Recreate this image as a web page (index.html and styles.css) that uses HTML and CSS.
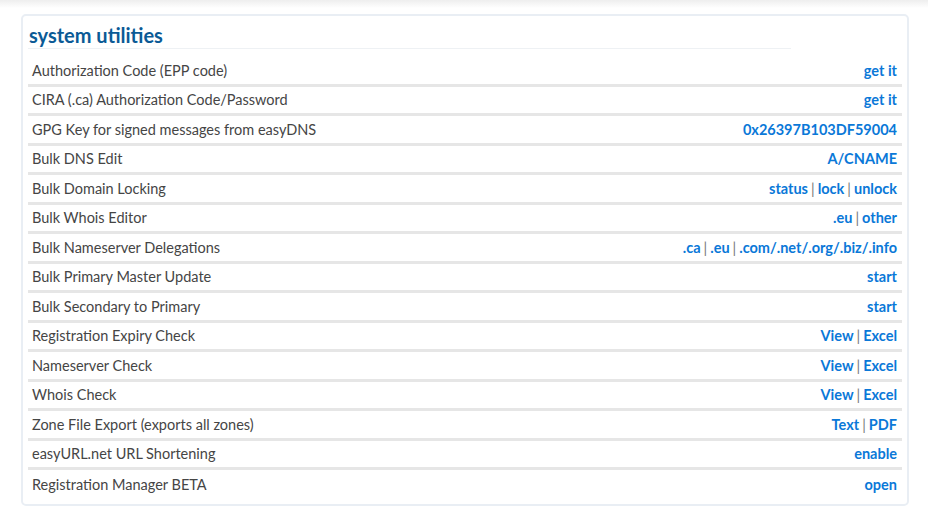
FILE: index.html
```html
<!DOCTYPE html>
<html>
<head>
<meta charset="utf-8">
<link rel="stylesheet" href="styles.css">
</head>
<body>
<div class="topshade"></div>
<div class="card">
  <h2 class="title">system utilities</h2>
  <div class="list">
    <div class="row"><span class="label">Authorization Code (EPP code)</span><span class="links"><a href="#">get it</a></span></div>
    <div class="row"><span class="label">CIRA (.ca) Authorization Code/Password</span><span class="links"><a href="#">get it</a></span></div>
    <div class="row"><span class="label">GPG Key for signed messages from easyDNS</span><span class="links"><a href="#">0x26397B103DF59004</a></span></div>
    <div class="row"><span class="label">Bulk DNS Edit</span><span class="links"><a href="#">A/CNAME</a></span></div>
    <div class="row"><span class="label">Bulk Domain Locking</span><span class="links"><a href="#">status</a><span class="sep">|</span><a href="#">lock</a><span class="sep">|</span><a href="#">unlock</a></span></div>
    <div class="row"><span class="label">Bulk Whois Editor</span><span class="links"><a href="#">.eu</a><span class="sep">|</span><a href="#">other</a></span></div>
    <div class="row"><span class="label">Bulk Nameserver Delegations</span><span class="links"><a href="#">.ca</a><span class="sep">|</span><a href="#">.eu</a><span class="sep">|</span><a href="#">.com/.net/.org/.biz/.info</a></span></div>
    <div class="row"><span class="label">Bulk Primary Master Update</span><span class="links"><a href="#">start</a></span></div>
    <div class="row"><span class="label">Bulk Secondary to Primary</span><span class="links"><a href="#">start</a></span></div>
    <div class="row"><span class="label">Registration Expiry Check</span><span class="links"><a href="#">View</a><span class="sep">|</span><a href="#">Excel</a></span></div>
    <div class="row"><span class="label">Nameserver Check</span><span class="links"><a href="#">View</a><span class="sep">|</span><a href="#">Excel</a></span></div>
    <div class="row"><span class="label">Whois Check</span><span class="links"><a href="#">View</a><span class="sep">|</span><a href="#">Excel</a></span></div>
    <div class="row"><span class="label">Zone File Export (exports all zones)</span><span class="links"><a href="#">Text</a><span class="sep">|</span><a href="#">PDF</a></span></div>
    <div class="row"><span class="label">easyURL.net URL Shortening</span><span class="links"><a href="#">enable</a></span></div>
    <div class="row"><span class="label">Registration Manager BETA</span><span class="links"><a href="#">open</a></span></div>
  </div>
</div>
</body>
</html>
```
FILE: styles.css
```css
* { box-sizing: border-box; }
html, body { margin: 0; padding: 0; background: #fff; }
body {
  font-family: Lato, "Open Sans", sans-serif;
  width: 928px;
  height: 532px;
  overflow: hidden;
  position: relative;
}
.topshade {
  height: 8px;
  background: linear-gradient(#eeeeee, #ffffff);
}
.card {
  margin: 6px 19px 0 21px;
  border: 2px solid #e9eef4;
  border-radius: 5px;
  padding: 6px 5px 4px 5px;
}
.title {
  margin: 0;
  width: 763px;
  font-size: 20px;
  font-weight: 700;
  color: #0b5a96;
  line-height: 26px;
  padding-left: 1px;
  border-bottom: 1px solid #eef1f4;
  padding-bottom: 0;
  margin-bottom: 8px;
}
.row {
  display: flex;
  justify-content: space-between;
  align-items: center;
  height: 29.5px;
  padding: 0 5px 0 4px;
  border-bottom: 3px solid #e6e6e6;
  font-size: 14.5px;
}
.row:last-child { border-bottom: none; }
.label { color: #454545; }
.links a {
  color: #0a78d8;
  font-weight: 700;
  text-decoration: none;
}
.sep {
  color: #777;
  margin: 0 3px;
}
```
